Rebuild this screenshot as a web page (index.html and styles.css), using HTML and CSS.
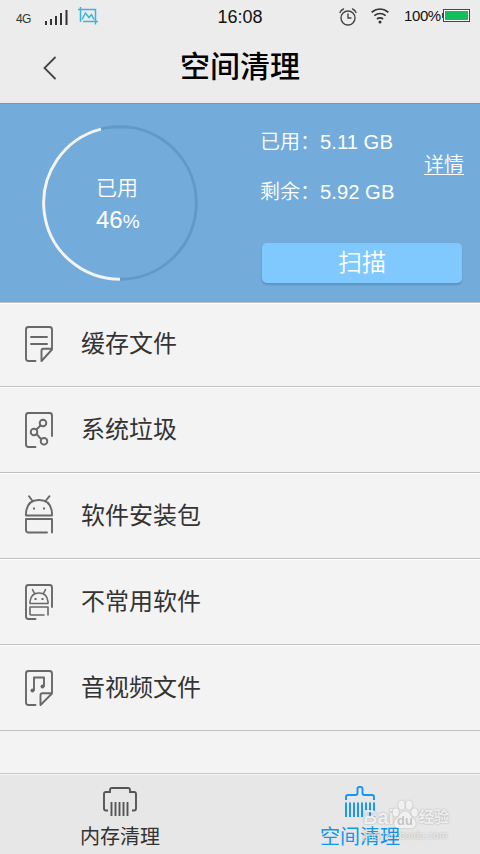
FILE: index.html
```html
<!DOCTYPE html>
<html lang="zh-CN">
<head>
    <meta charset="UTF-8">
    <meta name="viewport" content="width=device-width, initial-scale=1.0">
    <title>空间清理</title>
    <link rel="stylesheet" href="styles.css">
</head>
<body>
    <div class="statusbar">
        <div class="status-left">
            <span class="network">4G</span>
            <svg class="signal" width="23" height="15" viewBox="0 0 23 15" fill="#333">
                <path d="M0 11h2v4h-2zM5 9h2v6h-2zM10 6h2v9h-2zM15 3h2v12h-2zM20.500 0h2v15h-2z"/>
            </svg>
            <svg class="crop" width="20" height="18" viewBox="0 0 20 18" fill="none" stroke="#3bb3e0" stroke-width="1.500">
                <path d="M0 2.500h17.500v15M2.500 0v15M5 14.500h15M4 12.500l3.500-6.500 3.500 4.500 2.500-3 2.500 5"/>
            </svg>
        </div>
        <span class="clock">16:08</span>
        <div class="status-right">
            <svg class="alarm" width="18" height="18" viewBox="0 0 18 18" fill="none" stroke="#444" stroke-width="1.400" stroke-linecap="round">
                <circle cx="9" cy="10" r="7"/>
                <path d="M9 6v4h3M1 4.500q1-2.500 3.500-3.500M17 4.500q-1-2.500-3.500-3.500"/>
            </svg>
            <svg class="wifi" width="18" height="16" viewBox="0 0 18 16" fill="none" stroke="#333" stroke-width="1.700">
                <path d="M.6 4.200q8.400-6.400 16.800 0M3.300 7.600q5.700-4.200 11.400 0M5.900 11q3.100-2.300 6.200 0"/>
                <circle cx="9" cy="14" r="1.500" fill="#333" stroke="none"/>
            </svg>
            <span class="percent">100%</span>
            <svg class="battery" width="28" height="13" viewBox="0 0 28 13">
                <path d="M0 4h2v5h-2z" fill="#444"/>
                <rect x="1.500" y=".5" width="26" height="12" fill="#fff" stroke="#444"/>
                <rect x="3" y="2" width="23" height="9" fill="#13bf58"/>
            </svg>
        </div>
    </div>

    <div class="header">
        <svg class="back" width="14" height="24" viewBox="0 0 14 24" fill="none" stroke="#444" stroke-width="1.800" stroke-linecap="round">
            <path d="M12 1.500L1.500 12 12 22.500"/>
        </svg>
        <h1>空间清理</h1>
    </div>

    <div class="panel">
        <div class="ring">
            <svg width="156" height="156" viewBox="0 0 156 156" fill="none" stroke-width="3">
                <circle cx="78" cy="78" r="76.300" stroke="#5f9bca"/>
                <path d="M78 154.300A76.300 76.300 0 0 1 59 4.100" stroke="#f4f4f4"/>
            </svg>
            <div class="ring-text">
                <div class="ring-label">已用</div>
                <div class="ring-value">46<small>%</small></div>
            </div>
        </div>
        <div class="info">
            <div class="usage">
                <div class="sizes">
                    <p>已用：<span>5.11 GB</span></p>
                    <p>剩余：<span>5.92 GB</span></p>
                </div>
                <a class="detail">详情</a>
            </div>
            <button class="scan">扫描</button>
        </div>
    </div>

    <ul class="list">
        <li>
            <svg width="28" height="40" viewBox="0 0 28 40">
                <path d="M10.500 37H3.500Q1 37 1 34.500V5.500Q1 3 3.500 3h21Q27 3 27 5.500V25.500L16.500 37V27Q16.500 24.800 18.500 24.800H27M6 13h16M6 20h16"/>
            </svg>
            <span>缓存文件</span>
        </li>
        <li>
            <svg width="28" height="40" viewBox="0 0 28 40">
                <path d="M10.500 37H3.500Q1 37 1 34.500V5.500Q1 3 3.500 3h21Q27 3 27 5.500V26M15.500 15.500l-4 4M11.500 24l4.500 5"/>
                <circle cx="18" cy="13" r="3.300"/>
                <circle cx="9" cy="22" r="3.300"/>
                <circle cx="19" cy="31.300" r="3.300"/>
            </svg>
            <span>系统垃圾</span>
        </li>
        <li>
            <svg class="android" width="28" height="40" viewBox="0 0 28 40">
                <path d="M1 20.500V18Q2 5 14 5t13 13v2.500zM7.500 6L4 1.200M20.500 6L24.500 1.200M22 37.500H3.500Q1 37.500 1 35V24h26v13.500"/>
                <path class="eyes" d="M8 12.500h2v2H8zM18 12.500h2v2h-2z"/>
            </svg>
            <span>软件安装包</span>
        </li>
        <li>
            <svg width="28" height="40" viewBox="0 0 28 40">
                <path d="M10.500 37H3.500Q1 37 1 34.500V5.500Q1 3 3.500 3h21Q27 3 27 5.500V25"/>
                <path class="thin" d="M5 21.500v-2Q6 11 14 11t9 8.500V21.500zM9.500 11.500L7.500 7.500M18.500 11.500L20.500 7.500M19 33H6Q5 33 5 32V25h18v8"/>
                <path class="eyes" d="M9.500 16h2v2h-2zM16.500 16h2v2h-2z"/>
            </svg>
            <span>不常用软件</span>
        </li>
        <li>
            <svg width="28" height="40" viewBox="0 0 28 40">
                <path d="M10.500 37H3.500Q1 37 1 34.500V5.500Q1 3 3.500 3h21Q27 3 27 5.500V25.500L15.500 37V27.500Q15.500 25.300 17.500 25.300H27M9 22V9.500h10V18"/>
                <circle class="eyes" cx="7.500" cy="22.500" r="2"/>
                <circle class="eyes" cx="17.500" cy="18.500" r="2"/>
            </svg>
            <span>音视频文件</span>
        </li>
    </ul>

    <div class="tabbar">
        <div class="tab">
            <svg width="34" height="34" viewBox="0 0 34 34">
                <path d="M5 24.500H3Q1 24.500 1 22.500V8Q1 6 3 6H7V4Q7 2 9 2H25Q27 2 27 4V6H31Q33 6 33 8V22.500Q33 24.500 31 24.500H29"/>
                <path d="M8.500 16v14M12.500 16v14M16.500 16v14M20.500 16v14M24.500 16v14"/>
            </svg>
            <span>内存清理</span>
        </div>
        <div class="tab active">
            <svg width="34" height="34" viewBox="0 0 34 34">
                <path d="M3 14V11Q3 9 5 9H12.500Q14.500 9 14.500 7V2.500Q14.500 .9 17 .9T19.500 2.500V7Q19.500 9 21.500 9H29Q31 9 31 11V14"/>
                <path d="M3 16.500v14.500M7 16.500v14.500M11 16.500v14.500M15 16.500v14.500M19 16.500v14.500M23 16.500v14.500M27 16.500v14.500M31 16.500v14.500"/>
            </svg>
            <span>空间清理</span>
        </div>
    </div>

    <div class="watermark">
        <div class="brand">
            <span class="bai">Bai</span>
            <svg width="26" height="29" viewBox="0 0 26 29">
                <ellipse cx="3.800" cy="12.500" rx="3" ry="4"/>
                <ellipse cx="9.500" cy="5" rx="3" ry="4.300"/>
                <ellipse cx="17" cy="5" rx="3" ry="4.300"/>
                <ellipse cx="22.500" cy="12.500" rx="3" ry="4"/>
                <path d="M13 11.500c4 0 5 4 8.500 7.500 4 4 2 9 -2.500 9H7c-4.500 0-6.500-5-2.500-9C8 15.500 9 11.500 13 11.500z"/>
                <text x="13" y="25" text-anchor="middle">du</text>
            </svg>
            <span class="jingyan">经验</span>
        </div>
        <div class="site">jingyan.baidu.com</div>
    </div>
</body>
</html>
```
FILE: styles.css
```css
* {
    box-sizing: border-box;
}
body {
    margin: 0;
    width: 480px;
    height: 854px;
    overflow: hidden;
    display: flex;
    flex-direction: column;
    background: #f3f3f3;
    color: #333;
    font-family: "Liberation Sans", "Noto Sans CJK SC", sans-serif;
    font-weight: 350;
}
h1, p, ul {
    margin: 0;
    padding: 0;
}
svg {
    display: block;
    flex: none;
}

/* status bar */
.statusbar {
    height: 34px;
    display: grid;
    grid-template-columns: 1fr auto 1fr;
    background: #ececec;
    color: #111;
}
.status-left, .status-right {
    display: flex;
    align-items: flex-start;
}
.status-left {
    padding-left: 16px;
}
.status-right {
    justify-content: flex-end;
    padding-right: 10px;
}
.network {
    width: 29px;
    padding-top: 12px;
    color: #333;
    font-size: 12px;
    line-height: 14px;
    letter-spacing: -0.6px;
}
.signal {
    margin-top: 10px;
}
.crop {
    margin: 7px 0 0 10px;
}
.clock {
    font-size: 18px;
    line-height: 34px;
}
.alarm {
    margin: 8px 14px 0 0;
}
.wifi {
    margin: 8px 15px 0 0;
}
.percent {
    width: 38px;
    font-size: 15px;
    line-height: 32px;
    letter-spacing: -0.4px;
}
.battery {
    margin-top: 9px;
}

/* header */
.header {
    height: 69px;
    display: grid;
    grid-template-columns: 100px 1fr 100px;
    background: #ececec;
}
.back {
    margin: 22px 0 0 43px;
}
.header h1 {
    color: #000;
    font-size: 30px;
    font-weight: 500;
    line-height: 66px;
    text-align: center;
}

/* usage panel */
.panel {
    height: 199px;
    display: flex;
    border-top: 1px solid #45a8e0;
    background: #73acdb;
    color: #fff;
}
.ring {
    display: grid;
    margin: 21px 0 0 42px;
    width: 156px;
    height: 156px;
}
.ring > * {
    grid-area: 1 / 1;
}
.ring-text {
    padding: 48px 0 0 54px;
}
.ring-label {
    font-size: 21px;
    line-height: 30px;
}
.ring-value {
    font-size: 24px;
    line-height: 33px;
}
.ring-value small {
    font-size: 19px;
}
.info {
    width: 218px;
    margin-left: 64px;
}
.usage {
    display: flex;
    height: 139px;
}
.sizes {
    width: 164px;
    margin-left: -2px;
    padding-top: 13px;
    white-space: nowrap;
}
.sizes p {
    font-size: 20px;
    line-height: 50px;
}
.sizes span {
    font-size: 20.3px;
}
.detail {
    padding-top: 46px;
    font-size: 20px;
    line-height: 30px;
    text-decoration: underline;
    text-underline-offset: 2px;
    text-decoration-thickness: 1px;
    white-space: nowrap;
}
.scan {
    display: block;
    width: 200px;
    height: 40px;
    padding: 0;
    border: 0;
    border-radius: 5px;
    background: #80c9ff;
    box-shadow: 0 2px 2px #5b93c0;
    color: #fff;
    font: inherit;
    font-size: 24px;
    line-height: 40px;
}

/* list */
.list {
    flex: 1;
    border-top: 1px solid #c0c0c0;
    list-style: none;
}
.list li {
    height: 86px;
    display: flex;
    align-items: center;
    gap: 28px;
    padding-left: 25px;
    border-top: 1px solid #fff;
    border-bottom: 1px solid #c0c0c0;
    font-size: 24px;
    font-weight: 400;
}
.list li span {
    padding-bottom: 5px;
}
.list li:first-child {
    height: 84px;
    padding-bottom: 2px;
}
.list .android {
    margin-bottom: 2px;
}
.list svg {
    fill: none;
    stroke: #686868;
    stroke-width: 1.9;
    stroke-linejoin: round;
    stroke-linecap: round;
}
.list .thin {
    stroke-width: 1.6;
}
.list .eyes {
    fill: #686868;
    stroke: none;
}

/* bottom tabs */
.tabbar {
    height: 81px;
    display: flex;
    border-top: 1px solid #c8c8c8;
    background: #e7e7e7;
}
.tab {
    flex: 1;
    display: flex;
    flex-direction: column;
    align-items: center;
    padding-top: 11px;
    border-top: 1px solid #f5f5f5;
    font-size: 20px;
    font-weight: 400;
    line-height: 35px;
}
.tab svg {
    fill: none;
    stroke: #555;
    stroke-width: 1.9;
}
.tab.active {
    color: #1296ee;
}
.tab.active svg {
    stroke: #1296ee;
}

/* watermark over the tab bar */
.watermark {
    position: absolute;
    left: 363px;
    top: 800px;
    color: rgba(250, 250, 250, 0.85);
    text-shadow: 0 0 2px rgba(0, 0, 0, 0.3);
}
.brand {
    display: flex;
    align-items: flex-end;
    height: 29px;
    font-weight: bold;
    line-height: 24px;
}
.bai {
    width: 29px;
    font-size: 20px;
}
.brand svg {
    fill: rgba(250, 250, 250, 0.85);
    filter: drop-shadow(0 0 1px rgba(0, 0, 0, 0.25));
}
.brand text {
    fill: #c4c4c4;
    font-size: 13px;
    text-shadow: none;
}
.jingyan {
    margin-left: 1px;
    font-size: 15px;
}
.site {
    color: rgba(250, 250, 250, 0.7);
    font-size: 10.5px;
    line-height: 13px;
}
```
